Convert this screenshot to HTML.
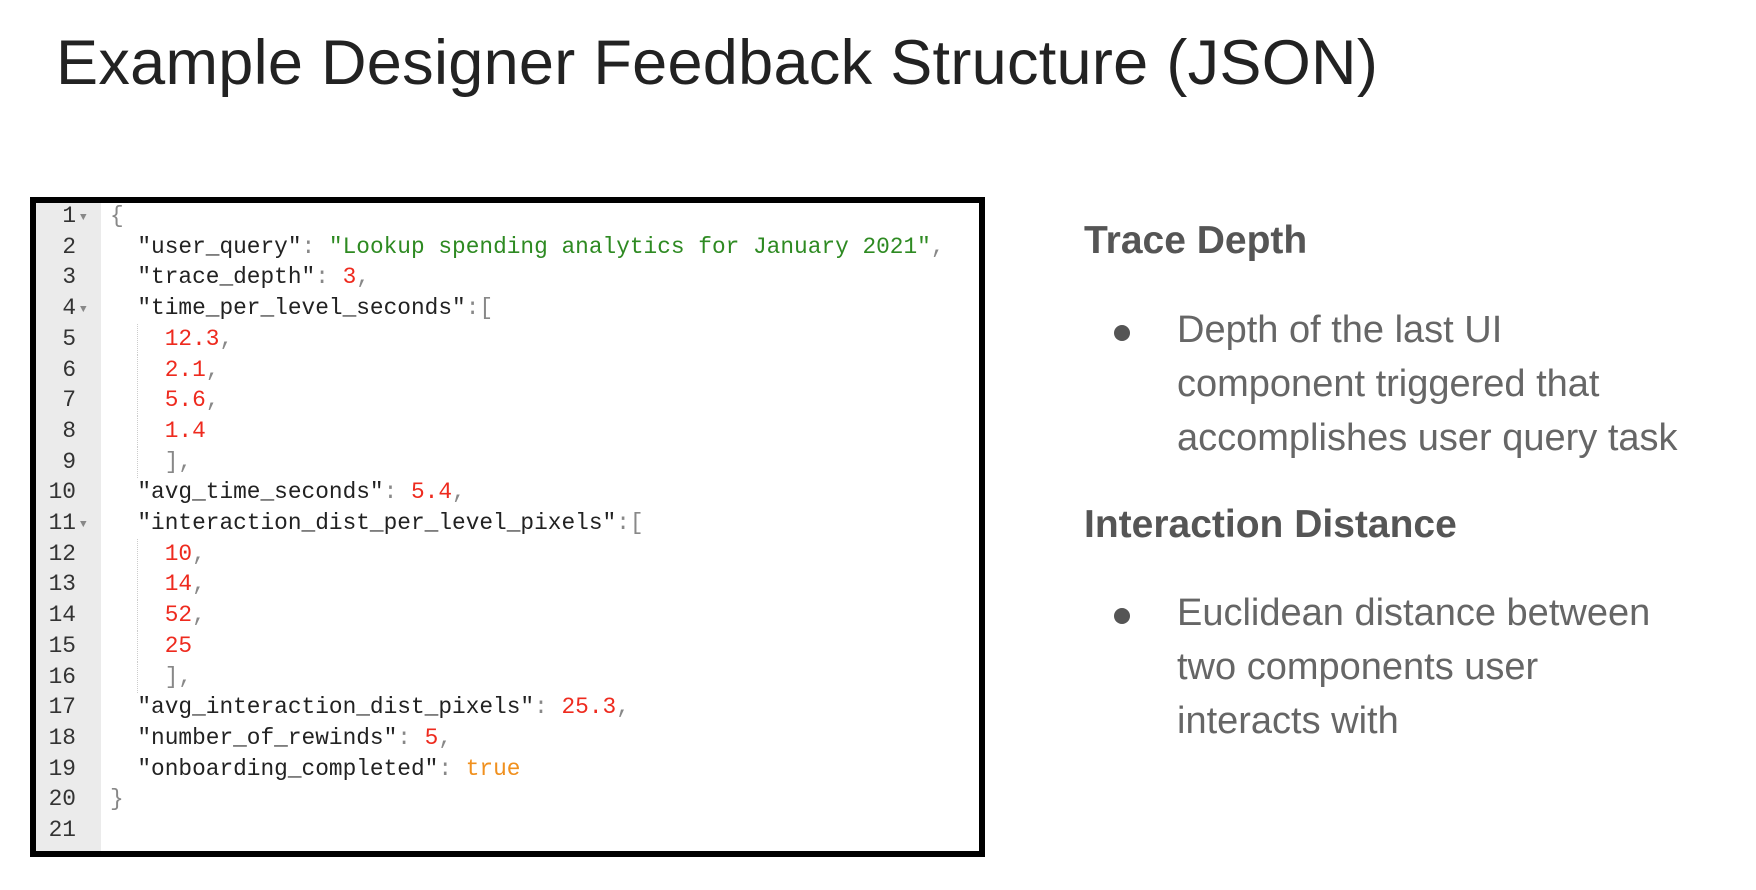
<!DOCTYPE html>
<html><head><meta charset="utf-8"><style>
body{margin:0;width:1756px;height:890px;background:#fff;position:relative;overflow:hidden;font-family:"Liberation Sans",sans-serif}
h1{position:absolute;left:56px;top:27px;margin:0;font-weight:normal;font-size:63px;color:#222;white-space:nowrap;letter-spacing:0.3px}
.box{position:absolute;left:30px;top:197px;width:943px;height:648px;border:6px solid #000;background:#fff}
.gut{position:absolute;left:0;top:0;width:65px;height:100%;background:#ebebeb}
.code{position:absolute;left:0;top:-2px;width:100%;font-family:"Liberation Mono",monospace;font-size:22.8px;line-height:30.7px;color:#222}
.ln{position:absolute;left:0;width:40px;text-align:right;color:#333}
.ar{position:absolute;left:44px;color:#888;font-size:11px}
.tx{position:absolute;left:74px;white-space:pre}
.p{color:#888}.s{color:#2e8a22}.n{color:#ee2a1e}.b{color:#f0901e}
.g{position:absolute;left:101px;width:0;border-left:1px dotted #ccc;height:31px}
.hd{position:absolute;left:1084px;font-weight:bold;font-size:39px;color:#555;margin:0}
.bl{position:absolute;left:1177px;font-size:38px;color:#666;line-height:54px;white-space:nowrap}
.dot{position:absolute;left:1114px;width:16px;height:16px;border-radius:50%;background:#555}
</style></head><body>
<h1>Example Designer Feedback Structure (JSON)</h1>
<div class="box"><div class="gut"></div>
<div class="code"><div style="position:relative;height:640px"><span class="ln" style="top:0">1</span><span class="ar" style="top:2px">▼</span><span class="tx" style="top:0"><span class="p">{</span></span>
<span class="ln" style="top:30.7px">2</span><span class="tx" style="top:30.7px">  "user_query"<span class="p">:</span> <span class="s">"Lookup spending analytics for January 2021"</span><span class="p">,</span></span>
<span class="ln" style="top:61.4px">3</span><span class="tx" style="top:61.4px">  "trace_depth"<span class="p">:</span> <span class="n">3</span><span class="p">,</span></span>
<span class="ln" style="top:92.1px">4</span><span class="ar" style="top:94px">▼</span><span class="tx" style="top:92.1px">  "time_per_level_seconds"<span class="p">:[</span></span>
<span class="ln" style="top:122.8px">5</span><span class="g" style="top:122.8px"></span><span class="tx" style="top:122.8px">    <span class="n">12.3</span><span class="p">,</span></span>
<span class="ln" style="top:153.5px">6</span><span class="g" style="top:153.5px"></span><span class="tx" style="top:153.5px">    <span class="n">2.1</span><span class="p">,</span></span>
<span class="ln" style="top:184.2px">7</span><span class="g" style="top:184.2px"></span><span class="tx" style="top:184.2px">    <span class="n">5.6</span><span class="p">,</span></span>
<span class="ln" style="top:214.9px">8</span><span class="g" style="top:214.9px"></span><span class="tx" style="top:214.9px">    <span class="n">1.4</span></span>
<span class="ln" style="top:245.6px">9</span><span class="g" style="top:245.6px"></span><span class="tx" style="top:245.6px">    <span class="p">],</span></span>
<span class="ln" style="top:276.3px">10</span><span class="tx" style="top:276.3px">  "avg_time_seconds"<span class="p">:</span> <span class="n">5.4</span><span class="p">,</span></span>
<span class="ln" style="top:307px">11</span><span class="ar" style="top:309px">▼</span><span class="tx" style="top:307px">  "interaction_dist_per_level_pixels"<span class="p">:[</span></span>
<span class="ln" style="top:337.7px">12</span><span class="g" style="top:337.7px"></span><span class="tx" style="top:337.7px">    <span class="n">10</span><span class="p">,</span></span>
<span class="ln" style="top:368.4px">13</span><span class="g" style="top:368.4px"></span><span class="tx" style="top:368.4px">    <span class="n">14</span><span class="p">,</span></span>
<span class="ln" style="top:399.1px">14</span><span class="g" style="top:399.1px"></span><span class="tx" style="top:399.1px">    <span class="n">52</span><span class="p">,</span></span>
<span class="ln" style="top:429.8px">15</span><span class="g" style="top:429.8px"></span><span class="tx" style="top:429.8px">    <span class="n">25</span></span>
<span class="ln" style="top:460.5px">16</span><span class="g" style="top:460.5px"></span><span class="tx" style="top:460.5px">    <span class="p">],</span></span>
<span class="ln" style="top:491.2px">17</span><span class="tx" style="top:491.2px">  "avg_interaction_dist_pixels"<span class="p">:</span> <span class="n">25.3</span><span class="p">,</span></span>
<span class="ln" style="top:521.9px">18</span><span class="tx" style="top:521.9px">  "number_of_rewinds"<span class="p">:</span> <span class="n">5</span><span class="p">,</span></span>
<span class="ln" style="top:552.6px">19</span><span class="tx" style="top:552.6px">  "onboarding_completed"<span class="p">:</span> <span class="b">true</span></span>
<span class="ln" style="top:583.3px">20</span><span class="tx" style="top:583.3px"><span class="p">}</span></span>
<span class="ln" style="top:614px">21</span></div></div></div>
<div class="hd" style="top:219px">Trace Depth</div>
<div class="dot" style="top:325px"></div>
<div class="bl" style="top:303px">Depth of the last UI<br>component triggered that<br>accomplishes user query task</div>
<div class="hd" style="top:503px">Interaction Distance</div>
<div class="dot" style="top:608px"></div>
<div class="bl" style="top:586px">Euclidean distance between<br>two components user<br>interacts with</div>
</body></html>
